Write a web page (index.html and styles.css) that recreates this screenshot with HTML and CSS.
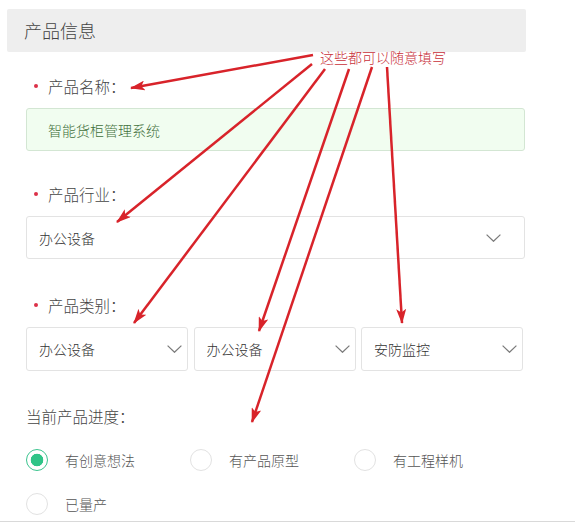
FILE: index.html
```html
<!DOCTYPE html>
<html lang="zh-CN">
<head>
<meta charset="utf-8">
<title>产品信息</title>
<link rel="stylesheet" href="styles.css">
</head>
<body>
<div class="page">
  <div class="card">
    <div class="card-head">产品信息</div>
    <div class="form">
      <div class="field field-name">
        <div class="label"><span class="req"></span>产品名称：</div>
        <div class="input success">智能货柜管理系统</div>
      </div>
      <div class="field field-industry">
        <div class="label"><span class="req"></span>产品行业：</div>
        <div class="select select-wide">
          <span>办公设备</span>
          <svg class="chev" width="15" height="8" viewBox="0 0 15 8"><path d="M0.6 0.6 L7.5 7.3 L14.4 0.6" fill="none" stroke="#7a7a7a" stroke-width="1.2"/></svg>
        </div>
      </div>
      <div class="field field-category">
        <div class="label"><span class="req"></span>产品类别：</div>
        <div class="select-row">
          <div class="select">
            <span>办公设备</span>
            <svg class="chev" width="15" height="8" viewBox="0 0 15 8"><path d="M0.6 0.6 L7.5 7.3 L14.4 0.6" fill="none" stroke="#7a7a7a" stroke-width="1.2"/></svg>
          </div>
          <div class="select">
            <span>办公设备</span>
            <svg class="chev" width="15" height="8" viewBox="0 0 15 8"><path d="M0.6 0.6 L7.5 7.3 L14.4 0.6" fill="none" stroke="#7a7a7a" stroke-width="1.2"/></svg>
          </div>
          <div class="select">
            <span>安防监控</span>
            <svg class="chev" width="15" height="8" viewBox="0 0 15 8"><path d="M0.6 0.6 L7.5 7.3 L14.4 0.6" fill="none" stroke="#7a7a7a" stroke-width="1.2"/></svg>
          </div>
        </div>
      </div>
      <div class="field field-progress">
        <div class="label plain">当前产品进度：</div>
        <div class="radios">
          <div class="radio checked"><span class="circle"></span><span>有创意想法</span></div>
          <div class="radio"><span class="circle"></span><span>有产品原型</span></div>
          <div class="radio"><span class="circle"></span><span>有工程样机</span></div>
          <div class="radio"><span class="circle"></span><span>已量产</span></div>
        </div>
      </div>
    </div>
  </div>
  <div class="rule"></div>

  <div class="annot">这些都可以随意填写</div>
  <svg class="arrows" width="575" height="524" viewBox="0 0 575 524">
    <defs>
      <marker id="ah" markerUnits="userSpaceOnUse" markerWidth="15" markerHeight="10" refX="14" refY="5" orient="auto">
        <path d="M0 0 L15 5 L0 10 L3.5 5 Z" fill="#d8232a"/>
      </marker>
    </defs>
    <g stroke="#d8232a" stroke-width="2.5" fill="none" marker-end="url(#ah)">
      <line x1="313" y1="55" x2="131" y2="88"/>
      <line x1="312" y1="64" x2="117" y2="222"/>
      <line x1="325" y1="69" x2="134" y2="323"/>
      <line x1="349" y1="69" x2="259" y2="331"/>
      <line x1="372" y1="67" x2="252" y2="422"/>
      <line x1="387" y1="67" x2="402" y2="323"/>
    </g>
  </svg>
</div>
</body>
</html>
```
FILE: styles.css
```css
html, body {
  margin: 0;
  padding: 0;
  background: #ffffff;
}

body {
  font-family: "Noto Sans CJK SC", "Noto Sans", sans-serif;
  font-weight: 300;
  color: #333;
}

.page {
  position: relative;
  width: 575px;
  height: 524px;
  overflow: hidden;
}

.card {
  margin: 9px 0 0 7px;
  width: 519px;
}

.card-head {
  height: 43px;
  line-height: 43px;
  background: #eeeeee;
  border-radius: 2px;
  padding-left: 17px;
  font-size: 18px;
  color: #444;
}

.form {
  padding: 0 1px 0 19px;
}

.field-name { margin-top: 23px; }
.field-industry { margin-top: 32px; }
.field-category { margin-top: 35px; }
.field-progress { margin-top: 34px; }

.label {
  display: flex;
  align-items: center;
  height: 22px;
  font-size: 15.5px;
  color: #444;
  margin-bottom: 11px;
}

.label .req {
  width: 4px;
  height: 4px;
  border-radius: 50%;
  background: #dc3048;
  margin: 0 10px 0 8px;
}

.label.plain {
  margin-bottom: 22px;
}

.input {
  box-sizing: border-box;
  height: 43px;
  display: flex;
  align-items: center;
  padding-left: 21px;
  font-size: 14px;
  border-radius: 3px;
}

.input.success {
  background: #f1fdf0;
  border: 1px solid #d3e6d3;
  color: #3f6f3a;
}

.select {
  box-sizing: border-box;
  height: 44px;
  display: flex;
  align-items: center;
  justify-content: space-between;
  padding: 0 5px 0 12px;
  border: 1px solid #e3e3e3;
  border-radius: 3px;
  font-size: 14px;
  color: #333;
  background: #fff;
}

.select-wide {
  height: 43px;
  padding-right: 23px;
}

.select-row {
  display: grid;
  grid-template-columns: repeat(3, 162px);
  column-gap: 5.5px;
}

.radios {
  display: grid;
  grid-template-columns: repeat(3, 164px);
  row-gap: 22px;
}

.radio {
  display: flex;
  align-items: center;
  height: 22px;
  font-size: 14px;
  color: #555;
}

.radio .circle {
  box-sizing: border-box;
  width: 22px;
  height: 22px;
  border-radius: 50%;
  border: 1px solid #e2e2e2;
  margin-right: 17px;
  flex: none;
  background: #fff;
}

.radio.checked .circle {
  border-color: #3cc48f;
  background: radial-gradient(circle, #2ec487 0, #2ec487 6px, #fff 6.6px);
}

.rule {
  margin-top: 6px;
  height: 1px;
  background: #d9d9d9;
}

.annot {
  position: absolute;
  left: 320px;
  top: 47px;
  font-size: 14px;
  line-height: 20px;
  color: #c8303a;
}

.arrows {
  position: absolute;
  left: 0;
  top: 0;
  pointer-events: none;
}
```
